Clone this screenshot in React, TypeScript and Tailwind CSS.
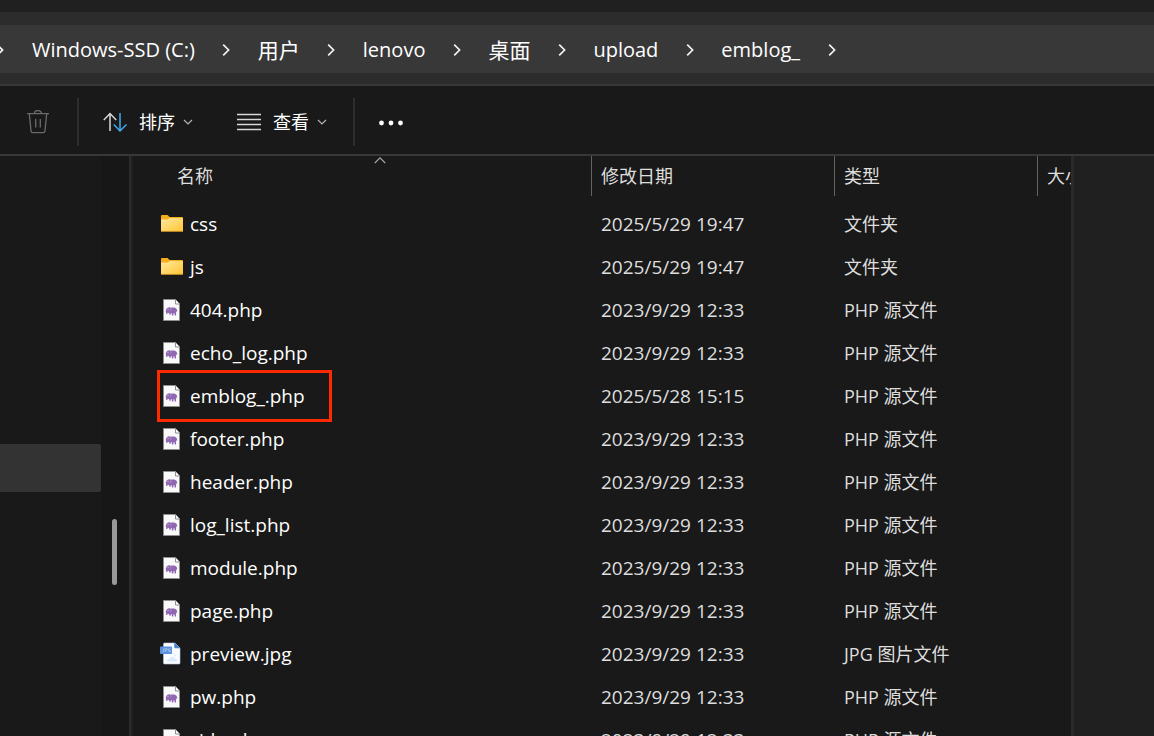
import React from "react";

type Kind = "folder" | "php" | "jpg";
interface Entry {
  name: string;
  date: string;
  kind: Kind;
  marked?: boolean;
}

const typeLabels: Record<Kind, string> = {
  folder: "文件夹",
  php: "PHP 源文件",
  jpg: "JPG 图片文件",
};

const released = "2023/9/29 12:33";
const entries: Entry[] = [
  { name: "css", date: "2025/5/29 19:47", kind: "folder" },
  { name: "js", date: "2025/5/29 19:47", kind: "folder" },
  { name: "404.php", date: released, kind: "php" },
  { name: "echo_log.php", date: released, kind: "php" },
  { name: "emblog_.php", date: "2025/5/28 15:15", kind: "php", marked: true },
  { name: "footer.php", date: released, kind: "php" },
  { name: "header.php", date: released, kind: "php" },
  { name: "log_list.php", date: released, kind: "php" },
  { name: "module.php", date: released, kind: "php" },
  { name: "page.php", date: released, kind: "php" },
  { name: "preview.jpg", date: released, kind: "jpg" },
  { name: "pw.php", date: released, kind: "php" },
  { name: "side.php", date: released, kind: "php" },
];

interface Crumb {
  label: string;
  han?: boolean;
}

const crumbs: Crumb[] = [
  { label: "Windows-SSD (C:)" },
  { label: "用户", han: true },
  { label: "lenovo" },
  { label: "桌面", han: true },
  { label: "upload" },
  { label: "emblog_" },
];

function CrumbArrow() {
  return (
    <svg className="h-3 w-2 shrink-0" viewBox="0 0 8 12" fill="none" stroke="#f2f2f2" strokeWidth="1.7" aria-hidden="true">
      <path d="M1.2 .7 6.6 6 1.2 11.3" />
    </svg>
  );
}

function DownArrow() {
  return (
    <svg className="h-2 w-2.5" viewBox="0 0 10 8" fill="none" stroke="#b4b4b4" strokeWidth="1.2" aria-hidden="true">
      <path d="M1 2l4 4 4-4" />
    </svg>
  );
}

function FolderIcon() {
  return (
    <svg className="size-6 shrink-0" viewBox="0 0 24 24" aria-hidden="true">
      <defs>
        <linearGradient id="folder-face" x1="0" y1="0" x2="1" y2="1">
          <stop offset="0" stopColor="#ffe7a0" />
          <stop offset="1" stopColor="#ffc635" />
        </linearGradient>
      </defs>
      <path d="M1 4a1 1 0 0 1 1-1h5.6l2 2H22a1 1 0 0 1 1 1v13H1z" fill="#f6ad1b" />
      <path d="M1 7.6h6.6l2-1.6H23v12.2a.8.8 0 0 1-.8.8H1.8a.8.8 0 0 1-.8-.8z" fill="url(#folder-face)" />
      <path d="M1 19.4h22" stroke="#dda02b" strokeWidth=".9" />
    </svg>
  );
}

function PhpIcon() {
  return (
    <svg className="size-6 shrink-0" viewBox="0 0 24 24" aria-hidden="true">
      <path d="M3.5 1.5h12l4 4.500v16.500h-16z" fill="#f9f9f9" stroke="#8e8e8e" />
      <path d="M15.500 1.500V6h4" fill="#fff" stroke="#8e8e8e" />
      <path
        d="M7.200 10c1-.8 2.400-.8 3.300-.3 1.300-.4 3.700-.4 4.900.2 1.400.7 1.900 1.900 1.800 3.600h-.8l-.3 1-.1 2.900h-1.300l-.3-2.100h-.9l-.2 2.100H12l-.4-2.300-.8.100-.2 1.500H9.500l-.6-1.700-1.200-.2-.5 1.300H6.100l.1-1.600c-.8-1.300-.5-3.500 1-4.500z"
        fill="#9068b2"
      />
      <circle cx="8" cy="11.500" r=".7" fill="#c9b4dc" />
      <path d="M10.600 10.200c.7 1 .5 2.200-.5 2.900" fill="none" stroke="#b79bd0" strokeWidth=".7" />
    </svg>
  );
}

function JpgIcon() {
  return (
    <svg className="size-6 shrink-0" viewBox="0 0 24 24" aria-hidden="true">
      <path d="M4.500 1h10.500l5 5.200V21a1 1 0 0 1-1 1H4.500a1 1 0 0 1-1-1V2a1 1 0 0 1 1-1z" fill="#f8fbff" stroke="#b9cdea" strokeWidth=".6" />
      <path d="M14.200 1H15l5 5.200h-4.600a1.200 1.200 0 0 1-1.200-1.200z" fill="#4b83cf" />
      <path d="M7 19.500c0-2 1.300-2.800 2.600-2.500.5-2.200 4-2.800 4.900-.4 1.600-.2 2.500 1 2.500 2.900z" fill="#dce9fa" />
      <circle cx="15" cy="13.500" r="1.300" fill="#e4eefb" />
      <rect x="0" y="4.500" width="12" height="7.500" rx=".7" fill="#5b91dc" />
      <path d="M3.700 6.400v2.700q0 1-1.200.9M5.300 10V6.500h1q1.100.1 1 1-.1.900-1.200.9M10.400 6.800q-1.900-.7-2 1.400.2 2 2 1.500V8.300h-.8" fill="none" stroke="#bdd6f6" strokeWidth=".7" />
    </svg>
  );
}

const icons: Record<Kind, () => React.JSX.Element> = {
  folder: FolderIcon,
  php: PhpIcon,
  jpg: JpgIcon,
};

function AddressBar() {
  return (
    <nav aria-label="路径" className="border-b-2 border-[#383838] bg-[#2c2c2c] pt-[13px] pb-[11px]">
      <ol className="flex h-12 items-center bg-[#383838] pt-0.5 whitespace-nowrap text-white">
        <li className="-ml-1 flex w-9 items-center">
          <CrumbArrow />
        </li>
        {crumbs.map((crumb) => (
          <li key={crumb.label} className="flex items-center">
            <a href="#" className={crumb.han ? "text-[21px] leading-7" : "text-[20px] leading-7"}>
              {crumb.label}
            </a>
            <span className="flex w-[63px] justify-center">
              <CrumbArrow />
            </span>
          </li>
        ))}
      </ol>
    </nav>
  );
}

function Toolbar() {
  return (
    <div role="toolbar" className="flex h-[70px] items-center border-b-2 border-[#383838] pt-1 text-[18px] text-white">
      <button aria-label="删除" className="flex w-[77px] justify-center">
        <svg className="size-6" viewBox="0 0 24 24" fill="none" stroke="#6a6a6a" strokeWidth="1.300" aria-hidden="true">
          <path d="M0 3.600h22M2.300 3.600l1.700 17.200a2 2 0 0 0 2 1.900h10a2 2 0 0 0 2-1.900l1.700-17.200M7.500 3.300a3.500 2.700 0 0 1 7 0M8.700 9v8.500M13.300 9v8.500" />
        </svg>
      </button>
      <div className="h-12 w-0.5 bg-[#2e2e2e]" />
      <button className="ml-6 flex items-center">
        <svg className="size-6" viewBox="0 0 24 24" fill="none" strokeWidth="1.500" aria-hidden="true">
          <path d="M7 21V3.500M.8 10 7 3.500l6.200 6.500" stroke="#d8d8d8" />
          <path d="M17 3v18M10.800 14.500 17 21l6.500-6.500" stroke="#42aaf0" />
        </svg>
        <span className="ml-3">排序</span>
        <span className="ml-2">
          <DownArrow />
        </span>
      </button>
      <button className="ml-11 flex items-center">
        <svg className="size-6" viewBox="0 0 24 24" fill="none" stroke="#d8d8d8" strokeWidth="1.300" aria-hidden="true">
          <path d="M0 4.500h24M0 9.500h24M0 14.500h24M0 19.500h24" />
        </svg>
        <span className="ml-3">查看</span>
        <span className="ml-2">
          <DownArrow />
        </span>
      </button>
      <div className="ml-[26px] h-12 w-0.5 bg-[#2e2e2e]" />
      <button aria-label="更多" className="ml-6 flex">
        <svg className="h-6 w-[26px]" viewBox="0 0 26 24" fill="#fff" aria-hidden="true">
          <circle cx="2.500" cy="13" r="2.400" />
          <circle cx="12" cy="13" r="2.400" />
          <circle cx="21.500" cy="13" r="2.400" />
        </svg>
      </button>
    </div>
  );
}

function Heading({ label }: { label: string }) {
  return (
    <th className="p-0 align-top font-normal">
      <button className="flex h-10 w-full items-center overflow-hidden border-l border-[#636363] pl-[9px] whitespace-nowrap">
        {label}
      </button>
    </th>
  );
}

function FileTable() {
  return (
    <table className="w-full table-fixed border-collapse text-left text-[18px] leading-6 text-[#dedede]">
      <colgroup>
        <col />
        <col className="w-[243px]" />
        <col className="w-[203px]" />
        <col className="w-[34px]" />
      </colgroup>
      <thead>
        <tr className="h-[46px]">
          <th className="p-0 pl-9 align-top font-normal" aria-sort="ascending">
            <button className="relative flex h-10 w-full items-center pl-2">
              名称
              <svg className="absolute top-0 left-1/2 h-2 w-3 -translate-x-1/2" viewBox="0 0 12 8" fill="none" stroke="#a8a8a8" strokeWidth="1.100" aria-hidden="true">
                <path d="M.8 7 6 1.800 11.200 7" />
              </svg>
            </button>
          </th>
          <Heading label="修改日期" />
          <Heading label="类型" />
          <Heading label="大小" />
        </tr>
      </thead>
      <tbody>
        {entries.map((entry) => {
          const Icon = icons[entry.kind];
          return (
            <tr key={entry.name} className="h-[43px]">
              <td className="p-0 pl-[27px]">
                <div className="relative flex w-fit items-center gap-1.5 text-white">
                  <Icon />
                  <span className="text-[19px]">{entry.name}</span>
                  {entry.marked && (
                    <div className="absolute -inset-y-3.5 -right-[27px] -left-[3px] border-3 border-[#ff2a00]" />
                  )}
                </div>
              </td>
              <td className="p-0 pl-2.5 text-[19px]">{entry.date}</td>
              <td className="p-0 pl-2.5">{typeLabels[entry.kind]}</td>
              <td className="p-0" />
            </tr>
          );
        })}
      </tbody>
    </table>
  );
}

export default function App() {
  return (
    <div className="flex h-screen flex-col overflow-hidden bg-[#191919] font-['Open_Sans','Noto_Sans_CJK_SC',sans-serif]">
      <div className="h-3 shrink-0 bg-[#202020]" />
      <AddressBar />
      <Toolbar />
      <div className="flex min-h-0 flex-1">
        <aside className="flex w-[129px] shrink-0">
          <div className="w-[101px] pt-72">
            <div className="h-12 rounded-r-xs bg-[#333333]" />
          </div>
          <div className="flex-1 bg-[#171717] pt-[363px] pl-[11px]">
            <div className="h-[66px] w-[5px] rounded-full bg-[#999999]" />
          </div>
        </aside>
        <div className="w-1 shrink-0 border-l-2 border-[#2c2c2c] bg-[#202020]" />
        <main className="min-w-0 flex-1 overflow-hidden">
          <FileTable />
        </main>
        <aside className="w-[83px] shrink-0 border-l-3 border-[#2a2a2a] bg-[#202020]" />
      </div>
    </div>
  );
}
